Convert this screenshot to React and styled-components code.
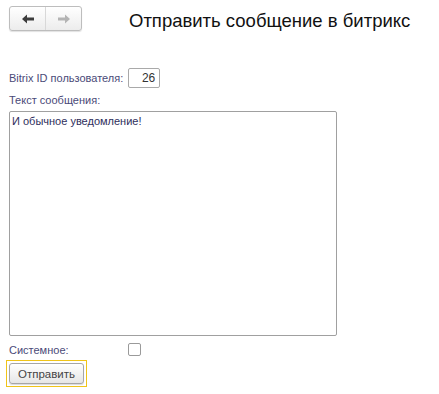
import React from "react";
import styled, { createGlobalStyle } from "styled-components";

const Global = createGlobalStyle`
  html, body { margin: 0; padding: 0; background: #fff; }
  body { font-family: "Liberation Sans", Arial, sans-serif; }
`;

const Page = styled.div`
  width: 439px;
  height: 394px;
  box-sizing: border-box;
  padding: 6px 0 0 9px;
  display: flex;
  flex-direction: column;
`;

const Header = styled.div`
  display: flex;
  align-items: center;
  height: 25px;
`;

const NavGroup = styled.div`
  display: flex;
  width: 73px;
  height: 25px;
  box-sizing: border-box;
  border: 1px solid #bdbdbd;
  border-radius: 3px;
  background: linear-gradient(#ffffff, #ececec);
  box-shadow: 0 1px 1px rgba(0,0,0,0.12);
`;

const NavBtn = styled.div`
  flex: 1;
  display: flex;
  align-items: center;
  justify-content: center;
  border-left: ${(p) => (p.$divider ? "1px solid #d8d8d8" : "none")};
`;

const Title = styled.div`
  margin-left: 47px;
  font-size: 18.5px;
  color: #111;
  position: relative;
  top: 2px;
`;

const Row = styled.div`
  display: flex;
  align-items: center;
  margin-top: ${(p) => p.$mt || 0}px;
  height: ${(p) => p.$h || 20}px;
`;

const Label = styled.span`
  font-size: 11px;
  color: #4a4a78;
  width: ${(p) => (p.$w ? p.$w + "px" : "auto")};
`;

const NumberField = styled.div`
  margin-left: 5px;
  width: 32px;
  height: 20px;
  box-sizing: border-box;
  border: 1px solid #a9a9a9;
  border-radius: 2px;
  font-size: 12px;
  color: #333;
  display: flex;
  align-items: center;
  justify-content: flex-end;
  padding-right: 4px;
`;

const TextArea = styled.div`
  margin-top: 2px;
  width: 328px;
  height: 225px;
  box-sizing: border-box;
  border: 1px solid #a0a0a0;
  border-radius: 2px;
  padding: 3px 2px;
  font-size: 11px;
  color: #2e2e5c;
`;

const Check = styled.div`
  width: 13px;
  height: 13px;
  box-sizing: border-box;
  border: 1px solid #9a9a9a;
  border-radius: 2px;
  background: #fff;
`;

const Focus = styled.div`
  margin-left: -3px;
  margin-top: 3px;
  width: 81px;
  height: 27px;
  box-sizing: border-box;
  border: 1px solid #f0c419;
  padding: 2px;
`;

const Button = styled.div`
  height: 21px;
  box-sizing: border-box;
  border: 1px solid #a6a6a6;
  border-radius: 3px;
  background: linear-gradient(#ffffff, #e6e6e6);
  box-shadow: 0 1px 1px rgba(0,0,0,0.15);
  font-size: 11.5px;
  color: #444;
  display: flex;
  align-items: center;
  justify-content: center;
`;

const Arrow = ({ dir, color }) => (
  <svg width="12" height="10" viewBox="0 0 12 10">
    <g transform={dir === "right" ? "translate(12,0) scale(-1,1)" : undefined}>
      <path d="M0 5 L5 0.5 L5 3.5 L12 3.5 L12 6.5 L5 6.5 L5 9.5 Z" fill={color} />
    </g>
  </svg>
);

export default function App() {
  return (
    <>
      <Global />
      <Page>
        <Header>
          <NavGroup>
            <NavBtn>
              <Arrow dir="left" color="#3c3c3c" />
            </NavBtn>
            <NavBtn $divider>
              <Arrow dir="right" color="#b4b4b4" />
            </NavBtn>
          </NavGroup>
          <Title>Отправить сообщение в битрикс</Title>
        </Header>
        <Row $mt={37} $h={20}>
          <Label>Bitrix ID пользователя:</Label>
          <NumberField>26</NumberField>
        </Row>
        <Row $mt={3} $h={18}>
          <Label>Текст сообщения:</Label>
        </Row>
        <TextArea>И обычное уведомление!</TextArea>
        <Row $mt={6} $h={15}>
          <Label $w={119}>Системное:</Label>
          <Check />
        </Row>
        <Focus>
          <Button>Отправить</Button>
        </Focus>
      </Page>
    </>
  );
}
